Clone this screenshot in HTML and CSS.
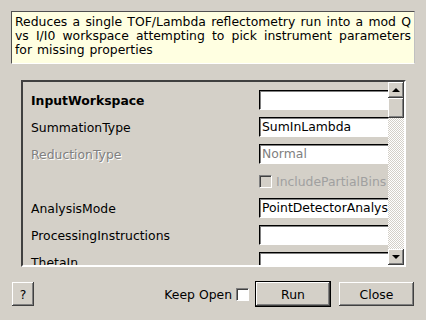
FILE: index.html
```html
<!DOCTYPE html>
<html lang="en">
<head>
  <meta charset="UTF-8">
  <title>ReflectometryReductionOneAuto</title>
  <link rel="stylesheet" href="styles.css">
</head>
<body>

<div class="desc">Reduces a single TOF/Lambda reflectometry run into a mod Q vs I/I0 workspace attempting to pick instrument parameters for missing properties</div>

<div class="props">
  <div class="viewport">
    <div class="row"><span class="name bold">InputWorkspace</span><div class="field"></div></div>
    <div class="row"><span class="name">SummationType</span><div class="field">SumInLambda</div></div>
    <div class="row"><span class="name disabled">ReductionType</span><div class="field grey">Normal</div></div>
    <div class="row"><span class="name"></span><div class="check-wrap"><span class="box"></span><span class="disabled-light">IncludePartialBins</span></div></div>
    <div class="row"><span class="name">AnalysisMode</span><div class="field">PointDetectorAnalysis</div></div>
    <div class="row"><span class="name">ProcessingInstructions</span><div class="field"></div></div>
    <div class="row"><span class="name">ThetaIn</span><div class="field"></div></div>
  </div>
  <div class="scrollbar">
    <div class="sb-btn"><span class="arrow up"></span></div>
    <div class="thumb"></div>
    <div class="track"></div>
    <div class="sb-btn"><span class="arrow down"></span></div>
  </div>
</div>

<div class="footer">
  <button class="btn help">?</button>
  <span class="spacer"></span>
  <label class="keep">Keep Open <span class="box white"></span></label>
  <button class="btn run">Run</button>
  <button class="btn close">Close</button>
</div>

</body>
</html>
```

FILE: styles.css
```css
body {
  margin: 0;
  background: #d4d0c8;
  font-family: "DejaVu Sans", sans-serif;
  font-size: 12.4px;
  color: #000;
}

.desc {
  margin: 11px 11px 0 11px;
  height: 46px;
  padding: 3px 3px 2px 3px;
  background: #ffffe1;
  border: 1px solid;
  border-color: #505050 #c0c0c0 #ffffff #505050;
  line-height: 14px;
  text-align: justify;
  word-spacing: 1px;
}

.props {
  margin: 16px 20px 0 21px;
  height: 183px;
  display: flex;
  border: 2px solid;
  border-color: #404040 #ffffff #ffffff #404040;
}

.viewport {
  flex: 1;
  overflow: hidden;
  padding: 8px 0 0 8px;
}

.row {
  display: flex;
  align-items: center;
  height: 20px;
  margin-bottom: 7px;
  white-space: nowrap;
}

.name {
  width: 228px;
  flex: none;
}

.bold { font-weight: bold; }

.disabled {
  color: #808080;
  text-shadow: 1px 1px #ffffff;
}

.disabled-light { color: #a0a0a0; }

.field {
  flex: none;
  width: 136px;
  height: 18px;
  line-height: 18px;
  padding-left: 2px;
  background: #ffffff;
  border: 1px solid;
  border-color: #000000 #ffffff #ffffff #000000;
  box-shadow: inset 1px 1px #808080;
  overflow: hidden;
}

.field.grey { color: #808080; }

.check-wrap {
  display: flex;
  align-items: center;
  gap: 4px;
}

.box {
  display: inline-block;
  width: 11px;
  height: 11px;
  border: 1px solid;
  border-color: #808080 #ffffff #ffffff #808080;
  box-shadow: inset 1px 1px #404040;
  background: #d4d0c8;
}

.box.white { background: #ffffff; }

.scrollbar {
  width: 16px;
  display: flex;
  flex-direction: column;
}

.sb-btn, .thumb {
  height: 16px;
  background: #d4d0c8;
  box-shadow: inset -1px -1px #404040, inset 1px 1px #ffffff, inset -2px -2px #808080;
  display: flex;
  align-items: center;
  justify-content: center;
}

.thumb { height: 20px; }

.track {
  flex: 1;
  background-image: conic-gradient(#ffffff 25%, #d4d0c8 0 50%, #ffffff 0 75%, #d4d0c8 0);
  background-size: 2px 2px;
}

.arrow {
  width: 0;
  height: 0;
  border-left: 4px solid transparent;
  border-right: 4px solid transparent;
}

.arrow.up { border-bottom: 4px solid #000; }
.arrow.down { border-top: 4px solid #000; }

.footer {
  display: flex;
  align-items: center;
  margin: 14px 12px 0 12px;
  height: 26px;
}

.spacer { flex: 1; }

.keep {
  display: flex;
  align-items: center;
  gap: 4px;
  margin-right: 6px;
}

.btn {
  font-family: "DejaVu Sans", sans-serif;
  font-size: 12.4px;
  height: 24px;
  padding: 0;
  background: #d4d0c8;
  border: none;
  box-shadow: inset -1px -1px #404040, inset 1px 1px #ffffff, inset -2px -2px #808080;
  color: #000;
}

.help { width: 22px; }

.run {
  width: 76px;
  height: 26px;
  border: 1px solid #000;
  margin-right: 8px;
}

.close { width: 75px; }
```
